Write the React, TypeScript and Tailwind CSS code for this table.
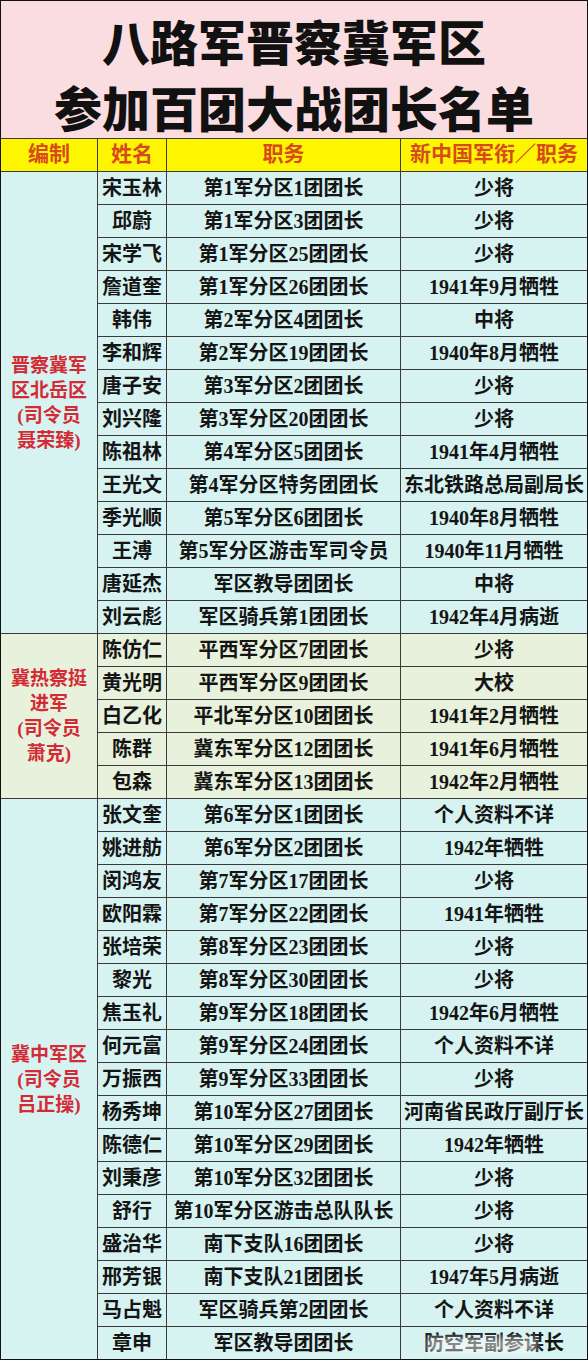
type Row = [string, string, string];

type Group = {
  label: string[];
  span: string;
  bg: string;
  rows: Row[];
};

const groups: Group[] = [
  {
    label: ["晋察冀军", "区北岳区", "(司令员", "聂荣臻)"],
    span: "row-span-14",
    bg: "bg-[#d6f3f1]",
    rows: [
      ["宋玉林", "第1军分区1团团长", "少将"],
      ["邱蔚", "第1军分区3团团长", "少将"],
      ["宋学飞", "第1军分区25团团长", "少将"],
      ["詹道奎", "第1军分区26团团长", "1941年9月牺牲"],
      ["韩伟", "第2军分区4团团长", "中将"],
      ["李和辉", "第2军分区19团团长", "1940年8月牺牲"],
      ["唐子安", "第3军分区2团团长", "少将"],
      ["刘兴隆", "第3军分区20团团长", "少将"],
      ["陈祖林", "第4军分区5团团长", "1941年4月牺牲"],
      ["王光文", "第4军分区特务团团长", "东北铁路总局副局长"],
      ["季光顺", "第5军分区6团团长", "1940年8月牺牲"],
      ["王溥", "第5军分区游击军司令员", "1940年11月牺牲"],
      ["唐延杰", "军区教导团团长", "中将"],
      ["刘云彪", "军区骑兵第1团团长", "1942年4月病逝"],
    ],
  },
  {
    label: ["冀热察挺", "进军", "(司令员", "萧克)"],
    span: "row-span-5",
    bg: "bg-[#e7f1db]",
    rows: [
      ["陈仿仁", "平西军分区7团团长", "少将"],
      ["黄光明", "平西军分区9团团长", "大校"],
      ["白乙化", "平北军分区10团团长", "1941年2月牺牲"],
      ["陈群", "冀东军分区12团团长", "1941年6月牺牲"],
      ["包森", "冀东军分区13团团长", "1942年2月牺牲"],
    ],
  },
  {
    label: ["冀中军区", "(司令员", "吕正操)"],
    span: "row-span-17",
    bg: "bg-[#d6f3f1]",
    rows: [
      ["张文奎", "第6军分区1团团长", "个人资料不详"],
      ["姚进舫", "第6军分区2团团长", "1942年牺牲"],
      ["闵鸿友", "第7军分区17团团长", "少将"],
      ["欧阳霖", "第7军分区22团团长", "1941年牺牲"],
      ["张培荣", "第8军分区23团团长", "少将"],
      ["黎光", "第8军分区30团团长", "少将"],
      ["焦玉礼", "第9军分区18团团长", "1942年6月牺牲"],
      ["何元富", "第9军分区24团团长", "个人资料不详"],
      ["万振西", "第9军分区33团团长", "少将"],
      ["杨秀坤", "第10军分区27团团长", "河南省民政厅副厅长"],
      ["陈德仁", "第10军分区29团团长", "1942年牺牲"],
      ["刘秉彦", "第10军分区32团团长", "少将"],
      ["舒行", "第10军分区游击总队队长", "少将"],
      ["盛治华", "南下支队16团团长", "少将"],
      ["邢芳银", "南下支队21团团长", "1947年5月病逝"],
      ["马占魁", "军区骑兵第2团团长", "个人资料不详"],
      ["章申", "军区教导团团长", "防空军副参谋长"],
    ],
  },
];

const headers = ["编制", "姓名", "职务", "新中国军衔／职务"];

export default function App() {
  return (
    <div className="w-[588px] h-[1360px] bg-white font-['Liberation_Serif','Noto_Sans_CJK_SC',serif]">
      <div className="relative border border-[#111] overflow-hidden">
        {/* Title */}
        <div className="h-[137px] bg-[#f9dde0] pt-[6px] text-center text-[48px] leading-[66px] font-black text-[#111] font-['Noto_Sans_CJK_SC',sans-serif]">
          <div>八路军晋察冀军区</div>
          <div>参加百团大战团长名单</div>
        </div>

        {/* Table */}
        <div className="grid grid-cols-[96px_68px_233px_1fr] auto-rows-[32px] gap-px bg-[#3a3a3a] border-t border-[#3a3a3a]">
          {headers.map((h) => (
            <div
              key={h}
              className="flex items-center justify-center bg-[#fdf600] text-[21px] font-semibold text-[#d84a1c] whitespace-nowrap"
            >
              {h}
            </div>
          ))}

          {groups.map((g) => [
            <div
              key={g.label.join("")}
              className={`${g.span} ${g.bg} flex flex-col items-center justify-center text-[19px] leading-[25px] font-semibold text-[#d42a35]`}
            >
              {g.label.map((l) => (
                <div key={l}>{l}</div>
              ))}
            </div>,
            ...g.rows.map((r) => [
              <div key={r[0] + "n"} className={`${g.bg} flex items-center justify-center text-[20px] font-semibold text-[#151515] whitespace-nowrap`}>
                {r[0]}
              </div>,
              <div key={r[0] + "d"} className={`${g.bg} flex items-center justify-center text-[20px] font-semibold text-[#151515] whitespace-nowrap`}>
                {r[1]}
              </div>,
              <div key={r[0] + "s"} className={`${g.bg} flex items-center justify-center text-[20px] font-semibold text-[#151515] whitespace-nowrap`}>
                {r[2]}
              </div>,
            ]),
          ])}
        </div>

        {/* watermark smudge on last cell */}
        <div className="absolute right-[50px] bottom-[6px] w-[110px] h-[16px] bg-white/50 blur-[3px]" />
      </div>
    </div>
  );
}
